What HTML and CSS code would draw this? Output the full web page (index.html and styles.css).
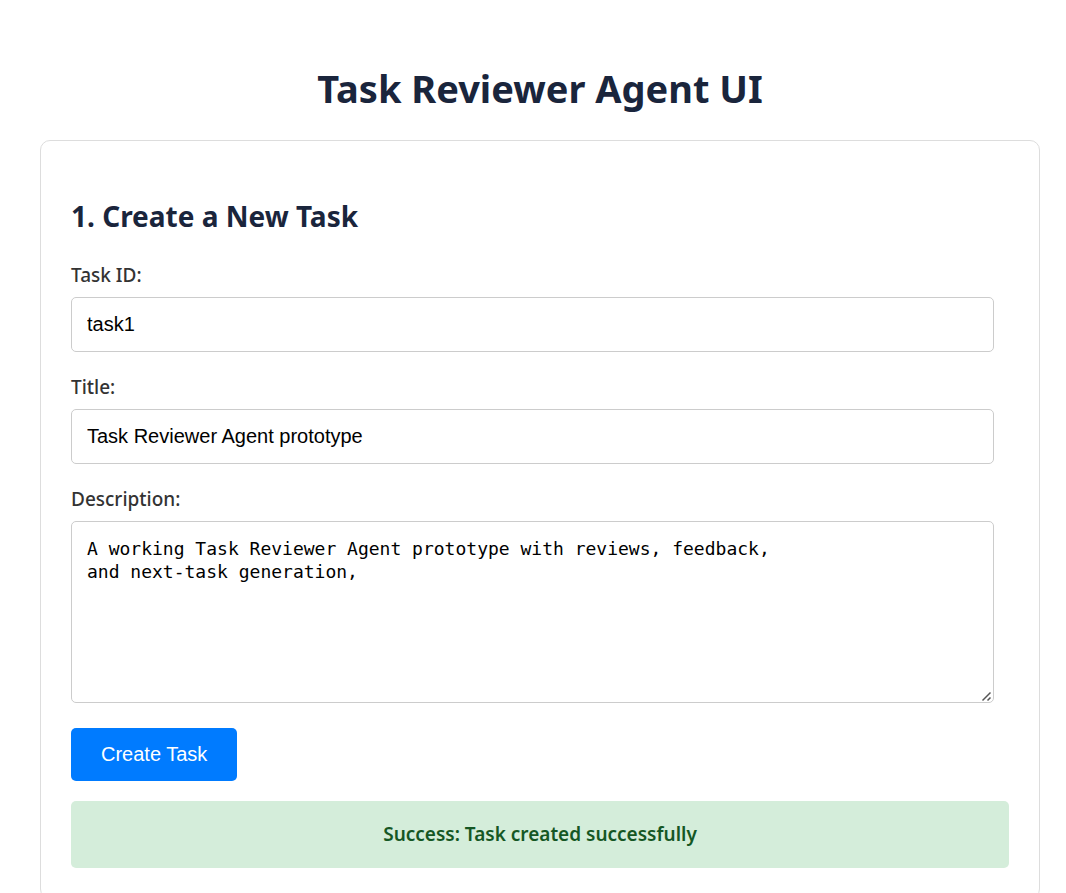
FILE: index.html
```html
<!DOCTYPE html>
<html lang="en">
<head>
<meta charset="utf-8">
<meta name="viewport" content="width=device-width, initial-scale=1">
<title>Task Reviewer Agent UI</title>
<link rel="stylesheet" href="styles.css">
</head>
<body>
<main class="page">
  <h1 class="page-title">Task Reviewer Agent UI</h1>
  <section class="card">
    <h2 class="card-title">1. Create a New Task</h2>
    <form class="form">
      <div class="field">
        <label class="label" for="task-id">Task ID:</label>
        <input class="control" id="task-id" type="text" value="task1">
      </div>
      <div class="field">
        <label class="label" for="title">Title:</label>
        <input class="control" id="title" type="text" value="Task Reviewer Agent prototype">
      </div>
      <div class="field">
        <label class="label" for="description">Description:</label>
        <textarea class="control control-area" id="description" spellcheck="false">A working Task Reviewer Agent prototype with reviews, feedback,
and next-task generation,</textarea>
      </div>
      <button class="submit" type="button">Create Task</button>
    </form>
    <p class="message" role="status">Success: Task created successfully</p>
  </section>
</main>
</body>
</html>
```
FILE: styles.css
```css
* {
  box-sizing: border-box;
}

html {
  scrollbar-width: none;
}

body {
  margin: 0;
  background: #fff;
  color: #333;
  font-family: "Segoe UI", "Noto Sans", sans-serif;
  font-size: 19px;
}

.page {
  padding: 58px 26px 40px 40px;
}

.page-title {
  margin: 0 0 22px;
  color: #1a253c;
  font-size: 38px;
  font-weight: 700;
  line-height: 60px;
  text-align: center;
}

.card {
  padding: 55px 30px 30px;
  border: 1px solid #ddd;
  border-radius: 10px;
}

.card-title {
  margin: 0 0 24px;
  color: #1a253c;
  font-size: 28px;
  font-weight: 700;
  line-height: 40px;
}

.form {
  padding-right: 15px;
}

.field {
  margin-bottom: 20px;
}

.label {
  display: block;
  margin-bottom: 7px;
  font-weight: 500;
  line-height: 30px;
}

.control {
  display: block;
  width: 100%;
  height: 55px;
  padding: 15px;
  border: 1px solid #ccc;
  border-radius: 5px;
  background: #fff;
  color: #000;
  font-family: "Liberation Sans", sans-serif;
  font-size: 20px;
}

.control-area {
  height: 182px;
  font-family: Consolas, "DejaVu Sans Mono", monospace;
  font-size: 18px;
  line-height: 23px;
  resize: vertical;
}

.control-area::-webkit-resizer {
  background: url("data:image/svg+xml,%3Csvg xmlns='http://www.w3.org/2000/svg' width='15' height='15'%3E%3Cpath d='M4.5 13.5l8-8M9.5 13.5l3-3' stroke='%23555' stroke-width='1.5' fill='none'/%3E%3C/svg%3E") no-repeat right bottom;
}

.submit {
  height: 53px;
  margin-top: 5px;
  padding: 0 30px;
  border: 0;
  border-radius: 5px;
  background: #007bff;
  color: #fff;
  font-family: "Liberation Sans", sans-serif;
  font-size: 20px;
  cursor: pointer;
}

.message {
  margin: 20px 0 0;
  padding: 20px;
  border-radius: 5px;
  background: #d4edda;
  color: #155724;
  font-weight: 600;
  line-height: 27px;
  text-align: center;
}
```
